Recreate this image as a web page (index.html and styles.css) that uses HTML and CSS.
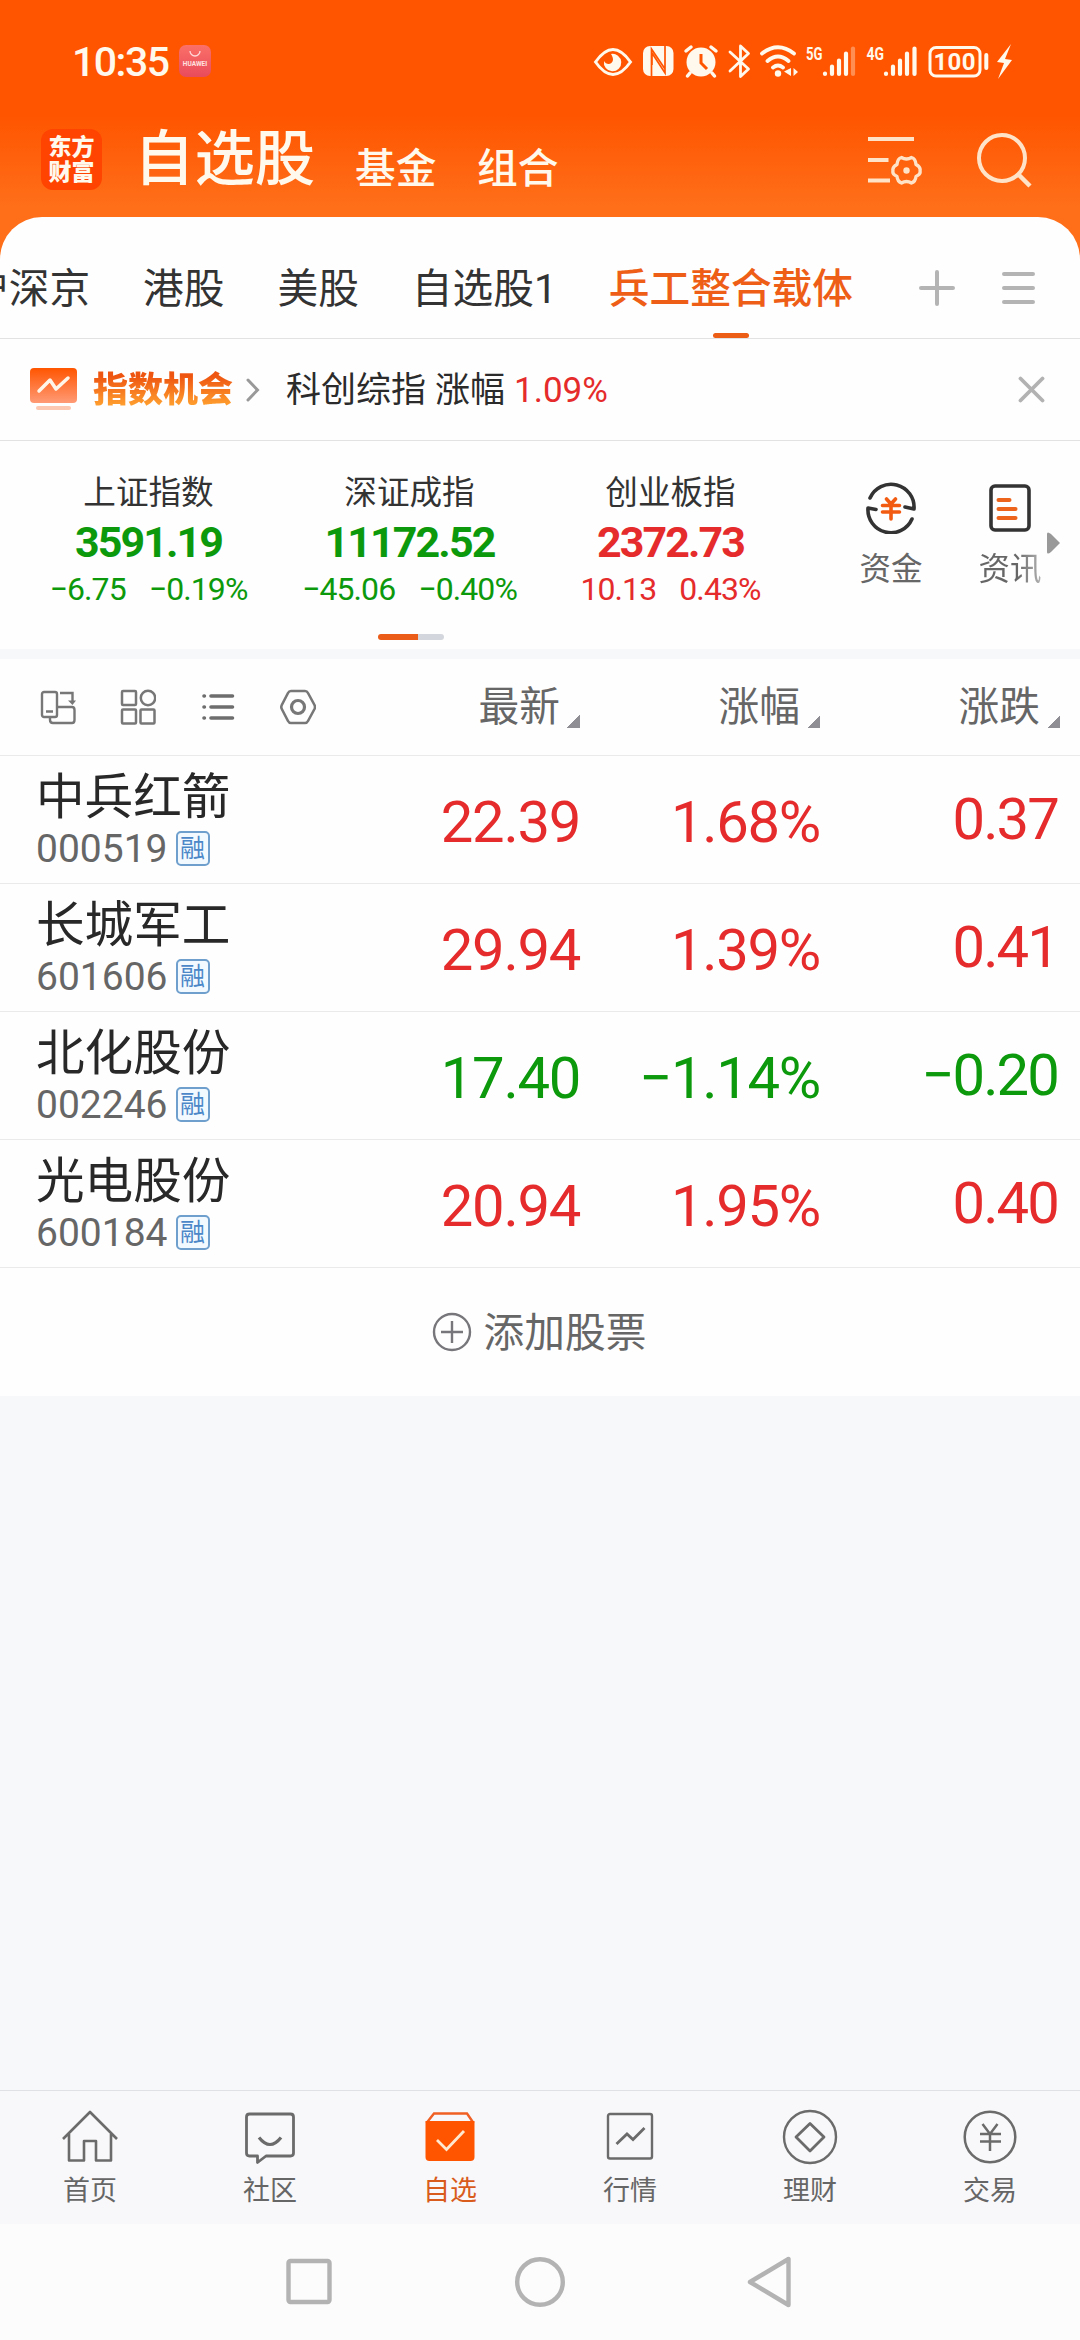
FILE: index.html
```html
<!DOCTYPE html>
<html lang="zh-CN">
<head>
<meta charset="utf-8">
<title>自选股</title>
<link rel="stylesheet" href="styles.css">
</head>
<body>
<div class="app">
  <header class="top">
    <div class="status">
      <span class="clock">10:35</span>
      <span class="store"><svg width="32" height="32" viewBox="0 0 32 32"><path d="M11 6a5 5 0 0 0 10 0" fill="none" stroke="#ffd9d9" stroke-width="1.3"/></svg><span class="store-name">HUAWEI</span></span>
      <svg class="status-icons" width="424" height="40" viewBox="592 41 424 40" fill="none" stroke="#fff8ec">
        <path d="M595.500 62Q613 37 630.500 62Q613 87 595.500 62Z" stroke-width="3"/>
        <path d="M611 54a8.700 8.700 0 1 1-7 7c2 4 8 4 9-1 0-3-1-4-2-6z" fill="#fff8ec" stroke="none"/>
        <rect x="643" y="46" width="30.500" height="30" rx="7" fill="#fff8ec" stroke="none"/>
        <path d="M651.500 76V49L665 69V57M665 46V73L652 53M652 54V65" stroke="#ff5500" stroke-width="1.700"/>
        <circle cx="701" cy="62" r="14.500" fill="#fff8ec" stroke="none"/>
        <path d="M686 51l5-4M716 51l-5-4M690 73l-2.500 3M712 73l2.500 3" stroke-width="3.500" stroke-linecap="round"/>
        <path d="M701 54v9l6 6" stroke="#ff5500" stroke-width="3"/>
        <path d="M730 52L748.500 69L740.500 76.500V46L748.500 53.500L730 71" stroke-width="2.800" stroke-linejoin="round" stroke-linecap="round"/>
        <path d="M762 53.500Q778 41 794 53.500M767.500 61Q778 52 788.500 61M773 67.500Q778 63.500 783 67.500" stroke-width="3.800" stroke-linecap="round"/>
        <circle cx="778" cy="73.500" r="3.200" fill="#fff8ec" stroke="none"/>
        <path d="M791 68v8l-7-4.500zM793.500 68v8l4.500-4z" fill="#fff8ec" stroke="none"/>
        <g stroke-width="4.200" stroke-linecap="round"><path d="M825 73.500v.5M832 66.500V74M839 60.500V74M846 53.500V74"/><path d="M853 48.500V74" opacity=".35"/><path d="M886 73.500v.5M893 66.500V74M900 60.500V74M907 53.500V74M914.500 48.500V74"/></g>
        <rect x="930" y="47.500" width="50" height="28.500" rx="6" stroke-width="3"/>
        <path d="M986.300 55v13" stroke-width="4" stroke-linecap="round"/>
        <path d="M1011 44L997 62L1004 63L998 79L1012 60L1005 59Z" fill="#fff8ec" stroke="none"/>
        <g class="status-text" stroke="none"><text x="806" y="59.500" font-size="19" textLength="16.500" lengthAdjust="spacingAndGlyphs">5G</text><text x="866.500" y="59.500" font-size="19" textLength="17.500" lengthAdjust="spacingAndGlyphs">4G</text><text x="933.500" y="70" font-size="24" textLength="42" lengthAdjust="spacing">100</text></g>
      </svg>
    </div>
    <div class="titlebar">
      <div class="logo"><span>东方</span><span>财富</span></div>
      <h1 class="title">自选股</h1>
      <span class="sub">基金</span>
      <span class="sub">组合</span>
      <svg class="filter" width="54" height="50" viewBox="0 0 54 50" fill="none" stroke="#ffe3c8" stroke-width="3.800"><path d="M0 4h46M0 25h20.500M0 45.500h22"/><path d="M33.500 22.500q5 3 10 0q4 1 4.500 7q5 2.500 4 6.500q1 3-4 5.500q-.5 5-4.500 6.500q-5-3-10 0q-4-1.500-4.500-6.500q-5-2.500-4-5.500q-1-4 4-6.500q.5-6 4.500-7z" stroke-width="3.300" stroke-linejoin="round"/><circle cx="38.500" cy="35.500" r="3.200" fill="#ffe3c8" stroke="none"/></svg>
      <svg class="search" width="56" height="56" viewBox="0 0 56 56" fill="none" stroke="#ffe3c8" stroke-width="4"><circle cx="25" cy="26" r="23"/><path d="M41 42l12 12" stroke-width="4.500"/></svg>
    </div>
  </header>
  <main class="sheet">
    <nav class="tabs">
      <span>沪深京</span><span>港股</span><span>美股</span><span class="tab-wide">自选股1</span><span class="active">兵工整合载体</span>
      <svg class="plus" width="36" height="36" viewBox="0 0 36 36"><path d="M2 18h32M18 2v32" stroke="#b4b4b4" stroke-width="4" stroke-linecap="round"/></svg>
      <svg class="menu" width="34" height="34" viewBox="0 0 34 34"><path d="M2 3h29M2 17h29M2 31h29" stroke="#b4b4b4" stroke-width="4" stroke-linecap="round"/></svg>
    </nav>
    <section class="banner">
      <svg width="48" height="44" viewBox="0 0 48 44"><defs><linearGradient id="warm" x2="0" y2="1"><stop stop-color="#ff5500"/><stop offset="1" stop-color="#ff9a76"/></linearGradient></defs><rect width="47" height="35" rx="4" fill="url(#warm)"/><path d="M9 23l11-11 6 9 12-11" fill="none" stroke="#fff6ea" stroke-width="3.500" stroke-linecap="round" stroke-linejoin="round"/><rect x="6" y="38" width="35" height="4" rx="2" fill="#fcc8b2"/></svg>
      <b class="banner-title">指数机会</b>
      <svg class="chev" width="14" height="24" viewBox="0 0 14 24"><path d="M2 2l9.500 10L2 22" fill="none" stroke="#999" stroke-width="3" stroke-linecap="round"/></svg>
      <span class="banner-text">科创综指</span><span class="banner-text">涨幅</span><span class="banner-text up">1.09%</span>
      <svg class="close" width="27" height="27" viewBox="0 0 27 27"><path d="M2.500 2.500l22 22M24.500 2.500l-22 22" stroke="#b2b2b2" stroke-width="3.800" stroke-linecap="round"/></svg>
    </section>
    <section class="market">
      <div class="index down"><span class="index-name">上证指数</span><b>3591.19</b><p><span>−6.75</span><span>−0.19%</span></p></div>
      <div class="index down"><span class="index-name">深证成指</span><b>11172.52</b><p><span>−45.06</span><span>−0.40%</span></p></div>
      <div class="index up"><span class="index-name">创业板指</span><b>2372.73</b><p><span>10.13</span><span>0.43%</span></p></div>
      <div class="quick"><svg width="50" height="52" viewBox="0 0 50 52" fill="none" stroke="#333" stroke-width="3.600" stroke-linecap="round" stroke-linejoin="round"><path d="M4 16A23 23 0 0 1 48 27L39 25M46 37A23 23 0 0 1 2 26L10 27.500"/><path d="M20.500 17l4.500 5 4.500-5M16.500 23.500h17M16.500 30h17M25 22v15" stroke="#f25c12"/></svg><span>资金</span></div>
      <div class="quick"><svg width="42" height="52" viewBox="0 0 42 52" fill="none" stroke="#333" stroke-width="3.600" stroke-linecap="round"><rect x="2" y="4" width="38" height="44" rx="4"/><path d="M9.500 18h11M9.500 27h17M9.500 36h17" stroke="#ed641c" stroke-width="4"/></svg><span class="fade">资讯</span></div>
      <svg class="more" width="14" height="22" viewBox="0 0 14 22"><path d="M0 2q0-3 4 0l9 9-9 9q-4 3-4 0z" fill="#999"/></svg>
      <i class="pager"></i>
    </section>
    <section class="heads">
      <div class="tools">
        <svg width="36" height="36" viewBox="0 0 36 36" fill="none" stroke="#777" stroke-width="2.400"><rect x="2" y="3" width="15" height="25" rx="2"/><path d="M6 22.500h7M10 28v3q0 3 3 3h19q2.500 0 2.500-3V21q0-3-2.500-3H17M20 4h12.500v10"/><path d="M28 11.500h8L32.500 16z" fill="#777" stroke="none"/></svg>
        <svg width="36" height="36" viewBox="0 0 36 36" fill="none" stroke="#777" stroke-width="2.500"><rect x="2" y="2" width="14" height="14" rx="1"/><circle cx="28" cy="9" r="7.200"/><rect x="2" y="20.500" width="14" height="14" rx="1"/><rect x="20.500" y="20.500" width="14" height="14" rx="1"/></svg>
        <svg width="36" height="36" viewBox="0 0 36 36" stroke="#6d6d6d" stroke-width="3.600" stroke-linecap="round"><path d="M4 7h.4M4 18h.4M4 29h.4M11 7h21.500M11 18h21.500M11 29h21.500"/></svg>
        <svg width="36" height="36" viewBox="0 0 36 36" fill="none" stroke="#777" stroke-width="2.600" stroke-linejoin="round"><path d="M11 2h14q2 0 3 2l6.500 12q1 2 0 4L28 32q-1 2-3 2H11q-2 0-3-2L1.800 20q-1-2 0-4L8 4q1-2 3-2z"/><circle cx="18" cy="18" r="6.500" stroke-width="3.200"/></svg>
      </div>
      <span class="head">最新</span><span class="head">涨幅</span><span class="head">涨跌</span>
    </section>
    <section class="stocks">
      <div class="stock up"><div><span class="stock-name">中兵红箭</span><p class="code">000519<i>融</i></p></div><span>22.39</span><span>1.68%</span><span class="delta">0.37</span></div>
      <div class="stock up"><div><span class="stock-name">长城军工</span><p class="code">601606<i>融</i></p></div><span>29.94</span><span>1.39%</span><span class="delta">0.41</span></div>
      <div class="stock down"><div><span class="stock-name">北化股份</span><p class="code">002246<i>融</i></p></div><span>17.40</span><span>−1.14%</span><span class="delta">−0.20</span></div>
      <div class="stock up"><div><span class="stock-name">光电股份</span><p class="code">600184<i>融</i></p></div><span>20.94</span><span>1.95%</span><span class="delta">0.40</span></div>
    </section>
    <div class="add"><svg width="40" height="40" viewBox="0 0 40 40" fill="none" stroke="#77777b" stroke-width="2.400"><circle cx="20" cy="20" r="18"/><path d="M9 20h22M20 9v22"/></svg><span>添加股票</span></div>
  </main>
  <footer class="tabbar">
    <div class="item"><svg width="56" height="56" viewBox="0 0 56 56" fill="none" stroke="#6b6b6b" stroke-width="2.600" stroke-linejoin="round"><path d="M1 30L28 3l27 27M7 25v26.500h15V32h12v19.500h15V25"/></svg><span>首页</span></div>
    <div class="item"><svg width="56" height="56" viewBox="0 0 56 56" fill="none" stroke="#6b6b6b" stroke-width="2.800" stroke-linejoin="round"><path d="M7.500 5h41q3 0 3 3v36q0 3-3 3H24l-8.500 6.500V47h-8q-3 0-3-3V8q0-3 3-3z"/><path d="M17 28.500q11 14 22 0" stroke-width="3.200"/></svg><span>社区</span></div>
    <div class="item active"><svg width="56" height="56" viewBox="0 0 56 56" fill="none"><path d="M4.500 14L12 4.500h33L51.500 14" stroke="#f06025" stroke-width="2.400"/><path d="M3.500 12h49v36q0 4-4 4h-41q-4 0-4-4z" fill="#ff5500"/><path d="M15 31l9.500 9.500L42 22" stroke="#ffe8d0" stroke-width="2.800"/></svg><span>自选</span></div>
    <div class="item"><svg width="56" height="56" viewBox="0 0 56 56" fill="none" stroke="#6b6b6b" stroke-width="2.400"><rect x="6" y="5" width="44" height="44.500" rx="2"/><path d="M14.500 35l10.500-10 6 5.500L42.500 19" stroke-width="2.800"/></svg><span>行情</span></div>
    <div class="item"><svg width="56" height="56" viewBox="0 0 56 56" fill="none" stroke="#6b6b6b" stroke-width="2.400" stroke-linejoin="round"><circle cx="28" cy="28" r="26"/><path d="M28 14.500L42 28 28 42 14 28z" stroke-width="2.800"/></svg><span>理财</span></div>
    <div class="item"><svg width="56" height="56" viewBox="0 0 56 56" fill="none" stroke="#6b6b6b" stroke-width="2.500"><circle cx="28" cy="28" r="25.300"/><path d="M20.500 15L28 25l7.500-10M18 25h21M18 32.500h21M28 25v17"/></svg><span>交易</span></div>
  </footer>
  <div class="sysnav">
    <svg width="50" height="54" viewBox="0 0 50 54" fill="none" stroke="#b3b3b3" stroke-width="4.400"><rect x="4.500" y="6" width="41" height="41" rx="2"/></svg>
    <svg width="54" height="54" viewBox="0 0 54 54" fill="none" stroke="#b3b3b3" stroke-width="4.400"><circle cx="27" cy="27" r="22.800"/></svg>
    <svg width="50" height="54" viewBox="0 0 50 54" fill="none" stroke="#b3b3b3" stroke-width="4.400" stroke-linejoin="round"><path d="M4 27L42.500 4v46z"/></svg>
  </div>
</div>
</body>
</html>
```
FILE: styles.css
```css
* { box-sizing: border-box; margin: 0; padding: 0; }
body { font-family: Roboto, "Noto Sans CJK SC", sans-serif; color: #2b2b2b; background: #f6f8fa; }
svg { display: block; flex: none; }
.app { width: 1080px; height: 2340px; display: flex; flex-direction: column; overflow: hidden; }
.up { color: #e52b2b; }
.down { color: #0c990c; }

.top { height: 260px; margin-bottom: -43px; flex: none; background: linear-gradient(#ff5500 115px, #ff6e19 205px); color: #fff8ec; }
.status { height: 100px; display: flex; align-items: center; padding: 22px 64px 0 72px; }
.clock { width: 107px; font-size: 41px; font-weight: 500; line-height: 40px; letter-spacing: -1.500px; padding-top: 1px; }
.store { width: 32px; height: 32px; border-radius: 7px; background: linear-gradient(#fb7068, #e84b5c); position: relative; }
.store-name { position: absolute; left: 0; right: 0; top: 15px; text-align: center; font-size: 6.500px; font-weight: 700; line-height: 8px; color: #ffe2e0; }
.status-icons { margin-left: auto; }
.status-text { fill: #fff8ec; font-weight: 700; }
.titlebar { height: 117px; display: flex; align-items: flex-start; padding-left: 41px; }
.logo { width: 61px; height: 61px; margin-top: 29px; border-radius: 12px; background: #ff4300; display: flex; flex-direction: column; align-items: center; justify-content: center; font-size: 23px; font-weight: 900; line-height: 25px; }
.title { margin: 23px 0 0 32px; width: 221px; font-size: 60.400px; line-height: 74px; font-weight: 500; }
.sub { width: 122px; margin-top: 44px; font-size: 40.700px; line-height: 50px; font-weight: 500; }
.filter { margin: 35px 0 0 269px; }
.search { margin: 32px 0 0 55px; }

.sheet { height: 1179px; flex: none; background: #fefefe; border-radius: 42px 42px 0 0; }
.tabs { height: 122px; display: flex; align-items: center; border-bottom: 1px solid #e2e2e2; font-size: 40.700px; color: #333; overflow: hidden; }
.tabs span { flex: none; margin-right: 53px; height: 121px; padding-top: 47px; line-height: 50px; white-space: nowrap; }
.tabs span:first-child { margin-left: -32px; }
.tabs .tab-wide { width: 144px; }
.tabs .active { margin-right: 66px; color: #ee5e16; font-weight: 500; display: flex; flex-direction: column; align-items: center; }
.tabs .active::after { content: ""; width: 36px; height: 5px; margin-top: auto; border-radius: 3px; background: #ec5d16; }
.plus { margin: 21px 47px 0 0; }
.menu { margin-top: 20px; }

.banner { height: 102px; padding: 0 35px 0 30px; display: flex; align-items: center; border-bottom: 1px solid #e2e2e2; }
.banner-title { margin: 3px 13px 0 15px; font-size: 35px; line-height: 50px; font-weight: 900; background: linear-gradient(#ee5510 20%, #ffa030 80%); background-clip: text; -webkit-background-clip: text; color: transparent; }
.chev { margin-right: 26px; }
.banner-text { font-size: 35px; line-height: 50px; margin: 3px 9px 0 0; }
.close { margin-left: auto; }

.market { height: 218px; display: grid; grid-template-columns: 261px 261px 261px 180px 58px 41px; padding-left: 18px; border-bottom: 10px solid #f6f8fa; position: relative; }
.index { display: flex; flex-direction: column; align-items: center; padding-top: 32px; }
.index-name { font-size: 32.600px; line-height: 40px; color: #333; }
.index b { font-size: 43px; line-height: 54px; margin-top: 2px; font-weight: 700; letter-spacing: -1.900px; }
.index p { display: flex; gap: 23px; font-size: 32px; line-height: 40px; letter-spacing: -0.900px; }
.quick { display: flex; flex-direction: column; align-items: center; padding-top: 41px; gap: 16px; font-size: 31.500px; line-height: 40px; color: #666; white-space: nowrap; }
.fade { background: linear-gradient(90deg, #666 60%, #b5b5b5); background-clip: text; -webkit-background-clip: text; color: transparent; }
.more { margin: 91px 0 0 8px; }
.pager { position: absolute; left: 378px; top: 193px; width: 66px; height: 6px; border-radius: 3px; background: linear-gradient(90deg, #ea5c17 40px, #d3d6dc 40px); }

.heads { height: 97px; display: grid; grid-template-columns: 340px 240px 240px 240px; align-items: center; border-bottom: 1px solid #eaeaea; }
.tools { display: flex; gap: 44px; padding-left: 40px; }
.head { font-size: 40.700px; line-height: 50px; color: #666; display: flex; justify-content: flex-end; align-items: flex-end; gap: 7px; }
.head::after { content: ""; width: 13px; height: 13px; margin-bottom: 4px; background: linear-gradient(135deg, transparent 50%, #8e8e94 50%); }

.stock { height: 128px; display: grid; grid-template-columns: 340px 240px 240px 238px; border-bottom: 1px solid #eaeaea; font-size: 58px; line-height: 68px; }
.stock > span { text-align: right; padding-top: 32px; letter-spacing: -1.300px; }
.stock > .delta { padding-top: 29px; letter-spacing: -1.900px; }
.stock > div { padding: 11px 0 0 36px; }
.stock-name { display: block; color: #282828; font-size: 48.600px; line-height: 62px; }
.code { display: flex; align-items: center; gap: 8px; font-size: 39px; line-height: 41px; color: #666; }
.code i { width: 34px; height: 35px; margin-top: -2px; border: 2px solid #6f9fcd; border-radius: 5px; background: #f2faff; color: #4c87c8; font-style: normal; font-size: 25px; line-height: 31px; text-align: center; }

.add { height: 128px; display: flex; align-items: center; justify-content: center; gap: 12px; font-size: 40.700px; line-height: 50px; color: #666; padding-right: 2px; }
.add span { padding-top: 2px; }

.tabbar { margin-top: auto; height: 134px; flex: none; border-top: 1px solid #dfe1e4; background: #f8f8fa; display: grid; grid-template-columns: repeat(6, 180px); }
.item { display: flex; flex-direction: column; align-items: center; padding-top: 18px; font-size: 27px; line-height: 36px; color: #666; }
.item span { margin-top: 8px; }
.item.active { color: #d95c1c; }
.sysnav { height: 116px; flex: none; background: #fcfcfc; display: flex; justify-content: center; gap: 179px; padding-top: 31px; }
```
